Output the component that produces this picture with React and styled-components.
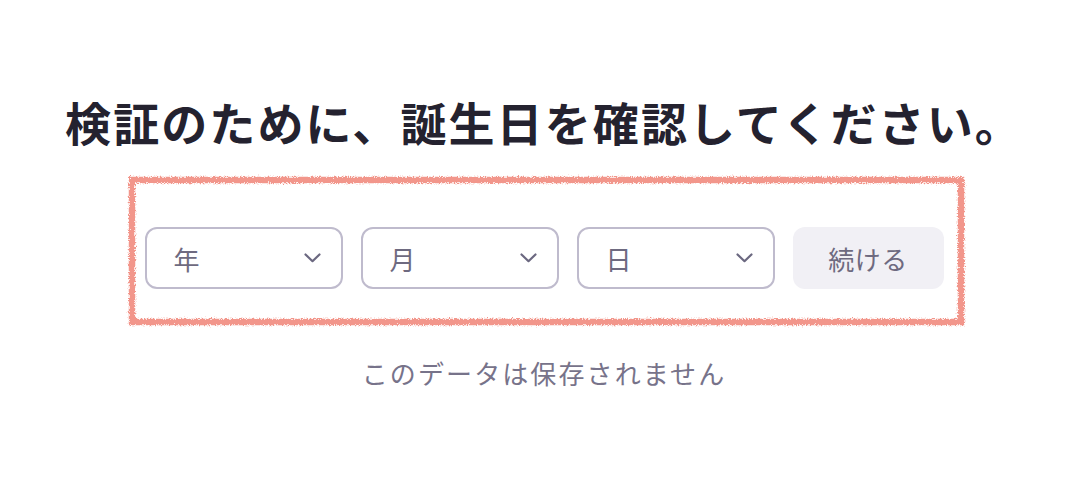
import React from 'react';
import styled, { createGlobalStyle } from 'styled-components';

const GlobalStyle = createGlobalStyle`
  body {
    margin: 0;
    background: #ffffff;
    font-family: 'Noto Sans CJK JP', 'Noto Sans', sans-serif;
  }
`;

const Page = styled.div`
  display: flex;
  flex-direction: column;
  align-items: center;
  padding-top: 93px;
`;

const Title = styled.h1`
  margin: 0;
  font-size: 46px;
  font-weight: 700;
  line-height: 56px;
  letter-spacing: 2.1px;
  color: #24222f;
`;

const Row = styled.div`
  position: relative;
  display: flex;
  gap: 18px;
  margin-top: 78px;
`;

// hand-drawn highlight around the form, sits over the page
const Annotation = styled.svg`
  position: absolute;
  left: -17px;
  top: -51px;
  width: calc(100% + 38px);
  height: calc(100% + 88px);
  pointer-events: none;
  overflow: visible;
`;

const Select = styled.div`
  box-sizing: border-box;
  width: 198px;
  height: 62px;
  display: flex;
  align-items: center;
  justify-content: space-between;
  padding: 0 20px 0 27px;
  border: 2px solid #bfbbcd;
  border-radius: 12px;
  font-size: 26px;
  color: #6e6a80;
`;

const Chevron = styled.svg`
  width: 17px;
  height: 10px;
`;

const Button = styled.button`
  box-sizing: border-box;
  width: 151px;
  height: 62px;
  border: none;
  border-radius: 12px;
  background: #f1f0f5;
  font-family: inherit;
  font-size: 26px;
  letter-spacing: 0.5px;
  color: #6e6a80;
`;

const Note = styled.p`
  margin: 66px 0 0;
  font-size: 26px;
  line-height: 36px;
  letter-spacing: 2.1px;
  color: #77738a;
`;

function DateSelect({ label }) {
  return (
    <Select>
      {label}
      <Chevron viewBox="0 0 17 10">
        <path d="M1.5 1.5 8.5 8.2 15.5 1.5" fill="none" stroke="#6b6880" strokeWidth="2.2" strokeLinecap="round" strokeLinejoin="round" />
      </Chevron>
    </Select>
  );
}

export default function App() {
  return (
    <Page>
      <GlobalStyle />
      <Title>検証のために、誕生日を確認してください。</Title>
      <Row>
        <DateSelect label="年" />
        <DateSelect label="月" />
        <DateSelect label="日" />
        <Button>続ける</Button>
        <Annotation preserveAspectRatio="none" viewBox="0 0 836 150">
          <defs>
            <filter id="rough" x="-5%" y="-10%" width="110%" height="120%">
              <feTurbulence type="fractalNoise" baseFrequency="0.8" numOctaves="3" seed="5" />
              <feDisplacementMap in="SourceGraphic" scale="5" />
            </filter>
          </defs>
          <rect x="4" y="4" width="828" height="142" fill="none" stroke="#f2968b" strokeWidth="6.5" filter="url(#rough)" />
        </Annotation>
      </Row>
      <Note>このデータは保存されません</Note>
    </Page>
  );
}
